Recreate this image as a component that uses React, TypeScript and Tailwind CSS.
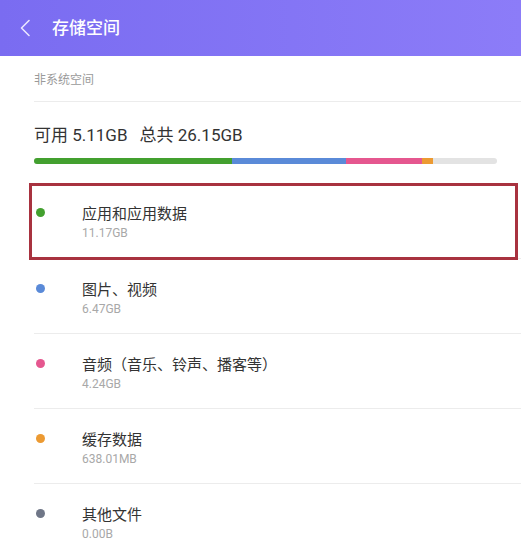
import React from "react";

interface itemType {
    name: string;
    size: string;
    color: string;
}

const items: itemType[] = [
    { name: "应用和应用数据", size: "11.17GB", color: "bg-[#43a02f]" },
    { name: "图片、视频", size: "6.47GB", color: "bg-[#5a8ad8]" },
    { name: "音频（音乐、铃声、播客等）", size: "4.24GB", color: "bg-[#e5578f]" },
    { name: "缓存数据", size: "638.01MB", color: "bg-[#ec9a32]" },
    { name: "其他文件", size: "0.00B", color: "bg-[#6f7687]" },
];

const App = () => {
    return (
        <div className="w-[521px] h-[559px] overflow-hidden bg-white font-['Roboto','Noto_Sans_CJK_SC',sans-serif]">
            <div className="flex items-center h-[56px] bg-gradient-to-r from-[#7a6cf1] to-[#8c7cf8] pl-[19px]">
                <svg width="12" height="18" viewBox="0 0 12 18" fill="none">
                    <path d="M10 1.5 L2.5 9 L10 16.5" stroke="#e9e6ff" strokeWidth="1.6" strokeLinecap="round" strokeLinejoin="round" />
                </svg>
                <div className="ml-[21px] text-[17px] font-medium text-white leading-none">存储空间</div>
            </div>

            <div className="pl-[34px]">
                <div className="h-[46px] pt-[16px] text-[12px] leading-[16px] text-[#9a9a9a] border-b border-[#ececec]">
                    非系统空间
                </div>
                <div className="pt-[22px] text-[17px] leading-[22px] text-[#333]">
                    可用 5.11GB<span className="ml-[12px]">总共 26.15GB</span>
                </div>
                <div className="mt-[12px] flex w-[463px] h-[6px] rounded-full overflow-hidden bg-[#e3e3e3]">
                    <div className="w-[198px] bg-[#43a02f]" />
                    <div className="w-[114px] bg-[#5a8ad8]" />
                    <div className="w-[76px] bg-[#e5578f]" />
                    <div className="w-[11px] bg-[#ec9a32]" />
                </div>
            </div>

            <div className="mt-[19px]">
                {items.map((item: itemType, idx: number) => {
                    return (
                        <div key={idx} className="relative pl-[34px]">
                            <div className={`flex h-[75px] ${idx > 0 ? "border-t border-[#ececec]" : ""}`}>
                                <div className={`mt-[25px] ml-[2px] w-[9px] h-[9px] rounded-full ${item.color}`} />
                                <div className="ml-[37px] pt-[21px]">
                                    <div className="text-[15px] leading-[20px] text-[#333]">{item.name}</div>
                                    <div className="mt-[1px] text-[12px] leading-[16px] text-[#a8a8a8]">{item.size}</div>
                                </div>
                            </div>
                            {idx === 0 && (
                                <div className="absolute z-10 left-[29px] top-0 w-[489px] h-[77px] border-[3px] border-[#a8323f]" />
                            )}
                        </div>
                    );
                })}
            </div>
        </div>
    );
};

export default App;
